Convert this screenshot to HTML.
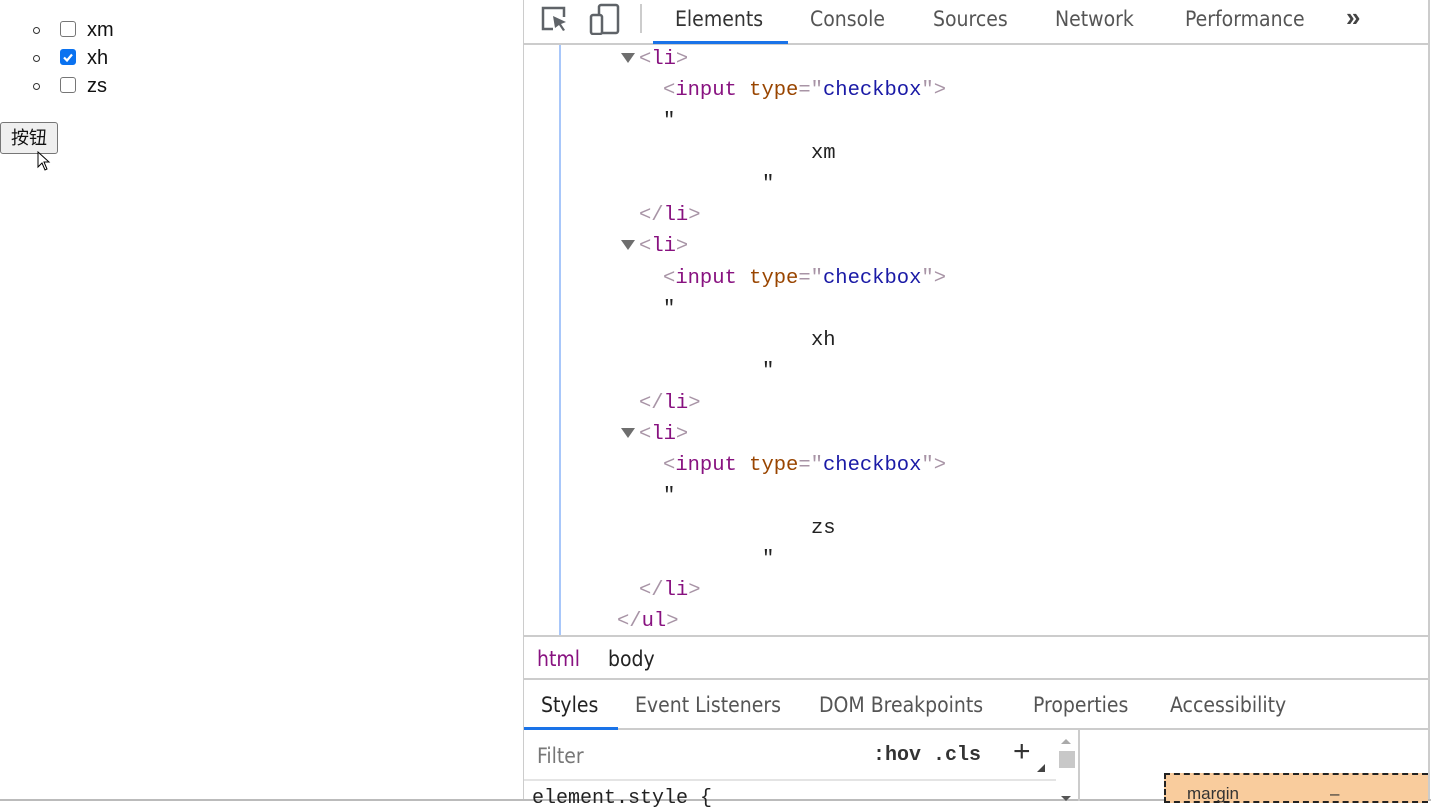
<!DOCTYPE html>
<html><head><meta charset="utf-8"><style>
*{margin:0;padding:0;box-sizing:border-box}
body{width:1431px;height:801px;position:relative;overflow:hidden;background:#fff;font-family:"Liberation Sans","Noto Sans CJK SC",sans-serif}
.a{position:absolute;white-space:pre}
.ui{font-size:21px;color:#333;font-family:"DejaVu Sans Condensed","Liberation Sans",sans-serif}
.m{font-family:"Liberation Mono",monospace;font-size:20.5px;line-height:31.25px;color:#222}
.t{color:#881280}.g{color:#a894a6}.at{color:#994500}.v{color:#1a1aa6}
.cb{position:absolute;width:16px;height:16px;border:1px solid #767676;border-radius:3px;background:#fff}
.dot{position:absolute;width:7px;height:7px;border:1px solid #333;border-radius:50%}
.tri{position:absolute;width:0;height:0;border-left:7px solid transparent;border-right:7px solid transparent;border-top:10px solid #6e6e6e}
</style></head><body>
<div class="dot" style="left:33px;top:27px"></div>
<div class="dot" style="left:33px;top:55px"></div>
<div class="dot" style="left:33px;top:83px"></div>
<div class="cb" style="left:60px;top:21px"></div>
<div class="cb" style="left:60px;top:49px;background:#0a72f0;border-color:#0a72f0"><svg width="14" height="14" style="position:absolute;left:0;top:0"><path d="M3 7.5l3 3 5-6" stroke="#fff" stroke-width="2.2" fill="none"/></svg></div>
<div class="cb" style="left:60px;top:77px"></div>
<div class="a" style="left:87px;top:19px;font-size:20px;color:#111">xm</div>
<div class="a" style="left:87px;top:47px;font-size:20px;color:#111">xh</div>
<div class="a" style="left:87px;top:75px;font-size:20px;color:#111">zs</div>
<div class="a" style="left:0;top:122px;width:58px;height:32px;border:1px solid #767676;border-radius:3px;background:#efefef;font-size:18px;text-align:center;line-height:30px;color:#111">按钮</div>
<svg class="a" style="left:37px;top:151px" width="16" height="22"><path d="M1 1v15l4-4 3 7 2-1-3-7h5z" fill="#fff" stroke="#000" stroke-width="1"/></svg>
<div class="a" style="left:523px;top:0;width:1px;height:801px;background:#ccc"></div>
<div class="a" style="left:1428px;top:0;width:2px;height:801px;background:#ccc"></div>
<div class="a" style="left:0;top:799px;width:1431px;height:2px;background:#bbb"></div>
<div class="a" style="left:524px;top:43px;width:905px;height:2px;background:#ccc"></div>
<svg class="a" style="left:540px;top:5px" width="30" height="30"><path d="M13 24H3V3h21v9" stroke="#5f6368" stroke-width="2.5" fill="none"/><path d="M13 11l13 6-5 2 4 6-2 1-4-6-4 3z" fill="#5f6368"/></svg>
<svg class="a" style="left:588px;top:3px" width="34" height="32"><rect x="11" y="2" width="19" height="28" rx="2" stroke="#5f6368" stroke-width="2.5" fill="none"/><rect x="3" y="12" width="11" height="19" rx="2" stroke="#5f6368" stroke-width="2.5" fill="#fff"/></svg>
<div class="a" style="left:640px;top:4px;width:2px;height:29px;background:#ccc"></div>
<div class="a ui" style="left:675px;top:7px">Elements</div>
<div class="a" style="left:653px;top:41px;width:135px;height:3px;background:#1a73e8"></div>
<div class="a ui" style="left:810px;top:7px;color:#555">Console</div>
<div class="a ui" style="left:933px;top:7px;color:#555">Sources</div>
<div class="a ui" style="left:1055px;top:7px;color:#555">Network</div>
<div class="a ui" style="left:1185px;top:7px;color:#555">Performance</div>
<div class="a" style="left:1346px;top:2px;font-size:26px;font-weight:bold;color:#444">»</div>
<div class="a" style="left:559px;top:45px;width:2px;height:590px;background:#a8c7fa"></div>
<div class="tri" style="left:621px;top:53px"></div>
<div class="tri" style="left:621px;top:240px"></div>
<div class="tri" style="left:621px;top:428px"></div>
<div class="a m" style="left:639px;top:44px"><span class="g">&lt;</span><span class="t">li</span><span class="g">&gt;</span></div>
<div class="a m" style="left:663px;top:75px"><span class="g">&lt;</span><span class="t">input</span> <span class="at">type</span><span class="g">="</span><span class="v">checkbox</span><span class="g">"&gt;</span></div>
<div class="a m" style="left:663px;top:106px">"</div>
<div class="a m" style="left:811px;top:138px">xm</div>
<div class="a m" style="left:762px;top:169px">"</div>
<div class="a m" style="left:639px;top:200px"><span class="g">&lt;/</span><span class="t">li</span><span class="g">&gt;</span></div>
<div class="a m" style="left:639px;top:231px"><span class="g">&lt;</span><span class="t">li</span><span class="g">&gt;</span></div>
<div class="a m" style="left:663px;top:263px"><span class="g">&lt;</span><span class="t">input</span> <span class="at">type</span><span class="g">="</span><span class="v">checkbox</span><span class="g">"&gt;</span></div>
<div class="a m" style="left:663px;top:294px">"</div>
<div class="a m" style="left:811px;top:325px">xh</div>
<div class="a m" style="left:762px;top:356px">"</div>
<div class="a m" style="left:639px;top:388px"><span class="g">&lt;/</span><span class="t">li</span><span class="g">&gt;</span></div>
<div class="a m" style="left:639px;top:419px"><span class="g">&lt;</span><span class="t">li</span><span class="g">&gt;</span></div>
<div class="a m" style="left:663px;top:450px"><span class="g">&lt;</span><span class="t">input</span> <span class="at">type</span><span class="g">="</span><span class="v">checkbox</span><span class="g">"&gt;</span></div>
<div class="a m" style="left:663px;top:481px">"</div>
<div class="a m" style="left:811px;top:513px">zs</div>
<div class="a m" style="left:762px;top:544px">"</div>
<div class="a m" style="left:639px;top:575px"><span class="g">&lt;/</span><span class="t">li</span><span class="g">&gt;</span></div>
<div class="a m" style="left:617px;top:606px"><span class="g">&lt;/</span><span class="t">ul</span><span class="g">&gt;</span></div>
<div class="a" style="left:524px;top:635px;width:905px;height:2px;background:#ccc"></div>
<div class="a ui" style="left:537px;top:647px;color:#881280">html</div>
<div class="a ui" style="left:608px;top:647px;color:#222">body</div>
<div class="a" style="left:524px;top:678px;width:905px;height:2px;background:#ccc"></div>
<div class="a ui" style="left:541px;top:693px;color:#222">Styles</div>
<div class="a ui" style="left:635px;top:693px;color:#555">Event Listeners</div>
<div class="a ui" style="left:819px;top:693px;color:#555">DOM Breakpoints</div>
<div class="a ui" style="left:1033px;top:693px;color:#555">Properties</div>
<div class="a ui" style="left:1170px;top:693px;color:#555">Accessibility</div>
<div class="a" style="left:524px;top:728px;width:905px;height:2px;background:#ccc"></div>
<div class="a" style="left:524px;top:727px;width:94px;height:3px;background:#1a73e8"></div>
<div class="a" style="left:1078px;top:730px;width:2px;height:71px;background:#ccc"></div>
<div class="a ui" style="left:537px;top:744px;color:#777">Filter</div>
<div class="a" style="left:873px;top:744px;font-family:'Liberation Mono',monospace;font-size:20px;font-weight:bold;color:#333">:hov .cls</div>
<div class="a" style="left:1013px;top:735px;font-size:30px;color:#333">+</div>
<div class="a" style="left:1037px;top:764px;width:0;height:0;border-left:8px solid transparent;border-bottom:8px solid #444"></div>
<div class="a" style="left:1061px;top:739px;width:0;height:0;border-left:5px solid transparent;border-right:5px solid transparent;border-bottom:5px solid #aaa"></div>
<div class="a" style="left:1059px;top:751px;width:16px;height:17px;background:#c8c8c8"></div>
<div class="a" style="left:1061px;top:796px;width:0;height:0;border-left:5px solid transparent;border-right:5px solid transparent;border-top:5px solid #555"></div>
<div class="a" style="left:524px;top:779px;width:532px;height:2px;background:#e4e4e4"></div>
<div class="a" style="left:532px;top:787px;font-family:'Liberation Mono',monospace;font-size:20px;color:#222">element.style {</div>
<div class="a" style="left:1164px;top:773px;width:264px;height:30px;background:#f9cc9d;border:2px dashed #222;border-right:none"></div>
<div class="a" style="left:1187px;top:784px;font-size:17px;color:#333">margin</div>
<div class="a" style="left:1330px;top:784px;font-size:17px;color:#333">–</div>
</body></html>
